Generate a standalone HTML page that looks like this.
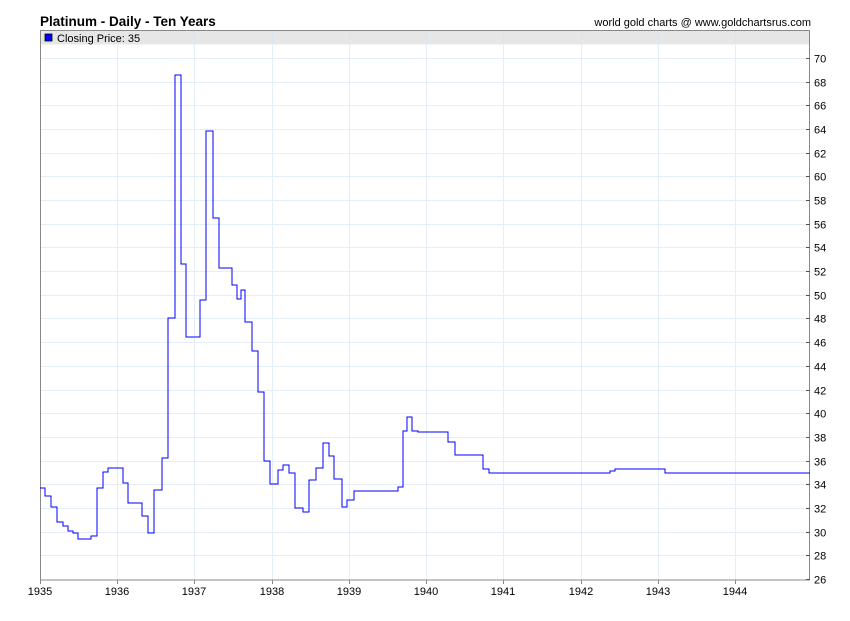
<!DOCTYPE html>
<html><head><meta charset="utf-8"><style>
body{margin:0;background:#fff;width:850px;height:616px;overflow:hidden;font-family:"Liberation Sans",sans-serif;}
</style></head><body>
<svg width="850" height="616" xmlns="http://www.w3.org/2000/svg" font-family="Liberation Sans, sans-serif">
<text x="40" y="26" font-size="13.5" font-weight="bold" fill="#000">Platinum - Daily - Ten Years</text>
<text x="811" y="26" font-size="11" text-anchor="end" fill="#000">world gold charts @ www.goldchartsrus.com</text>
<rect x="40.5" y="30.5" width="769" height="14" fill="#e6e6e6"/>
<g stroke="#e3eef9" stroke-width="1">
<line x1="117.5" y1="45" x2="117.5" y2="580"/><line x1="194.5" y1="45" x2="194.5" y2="580"/><line x1="272.5" y1="45" x2="272.5" y2="580"/><line x1="349.5" y1="45" x2="349.5" y2="580"/><line x1="426.5" y1="45" x2="426.5" y2="580"/><line x1="503.5" y1="45" x2="503.5" y2="580"/><line x1="581.5" y1="45" x2="581.5" y2="580"/><line x1="658.5" y1="45" x2="658.5" y2="580"/><line x1="735.5" y1="45" x2="735.5" y2="580"/>
<line x1="117.5" y1="31" x2="117.5" y2="44" stroke="#d8e4f0"/><line x1="194.5" y1="31" x2="194.5" y2="44" stroke="#d8e4f0"/><line x1="272.5" y1="31" x2="272.5" y2="44" stroke="#d8e4f0"/><line x1="349.5" y1="31" x2="349.5" y2="44" stroke="#d8e4f0"/><line x1="426.5" y1="31" x2="426.5" y2="44" stroke="#d8e4f0"/><line x1="503.5" y1="31" x2="503.5" y2="44" stroke="#d8e4f0"/><line x1="581.5" y1="31" x2="581.5" y2="44" stroke="#d8e4f0"/><line x1="658.5" y1="31" x2="658.5" y2="44" stroke="#d8e4f0"/><line x1="735.5" y1="31" x2="735.5" y2="44" stroke="#d8e4f0"/>
</g>
<g id="h" stroke="#e3eef9"></g>
<rect x="40.5" y="30.5" width="769" height="549.5" fill="none" stroke="#888"/>
<rect x="45" y="34" width="7" height="7" fill="#0000ff" stroke="#000" stroke-width="0.8"/>
<text x="57" y="42" font-size="11" fill="#000">Closing Price: 35</text>
<polyline fill="none" stroke="#0000ff" stroke-width="1" points="40,488 45,488 45,496 51,496 51,507 57,507 57,522 63,522 63,526 68,526 68,531 73,531 73,533 78,533 78,539 91,539 91,536 97,536 97,488 103,488 103,472 108,472 108,468 123,468 123,483 128,483 128,503 142,503 142,516 148,516 148,533 154,533 154,490 162,490 162,458 168,458 168,318 175,318 175,75 181,75 181,264 186,264 186,337 200,337 200,300 206,300 206,131 213,131 213,218 219,218 219,268 232,268 232,285 237,285 237,299 241,299 241,290 245,290 245,322 252,322 252,351 258,351 258,392 264,392 264,461 270,461 270,484 278,484 278,470 283,470 283,465 289,465 289,473 295,473 295,508 303,508 303,512 309,512 309,480 316,480 316,468 323,468 323,443 329,443 329,456 334,456 334,479 342,479 342,507 347,507 347,500 354,500 354,491 398,491 398,487 403,487 403,431 407,431 407,417 412,417 412,431 418,431 418,432 448,432 448,442 455,442 455,455 483,455 483,469 489,469 489,473 610,473 610,471 615,471 615,469 665,469 665,473 810,473"/>
<g font-size="11" fill="#000" text-anchor="middle">
<text x="40" y="595">1935</text><text x="117" y="595">1936</text><text x="194" y="595">1937</text><text x="272" y="595">1938</text><text x="349" y="595">1939</text><text x="426" y="595">1940</text><text x="503" y="595">1941</text><text x="581" y="595">1942</text><text x="658" y="595">1943</text><text x="735" y="595">1944</text>
</g>
<g stroke="#888"><line x1="40.5" y1="580" x2="40.5" y2="584"/><line x1="117.5" y1="580" x2="117.5" y2="584"/><line x1="194.5" y1="580" x2="194.5" y2="584"/><line x1="272.5" y1="580" x2="272.5" y2="584"/><line x1="349.5" y1="580" x2="349.5" y2="584"/><line x1="426.5" y1="580" x2="426.5" y2="584"/><line x1="503.5" y1="580" x2="503.5" y2="584"/><line x1="581.5" y1="580" x2="581.5" y2="584"/><line x1="658.5" y1="580" x2="658.5" y2="584"/><line x1="735.5" y1="580" x2="735.5" y2="584"/></g>
<g id="yl" font-size="11" fill="#000"></g>
<script>
var h=document.getElementById('h'),yl=document.getElementById('yl'),ns='http://www.w3.org/2000/svg';
for(var v=70;v>=26;v-=2){var y=Math.round(58+(70-v)*11.84)+0.5;
if(v>26){var l=document.createElementNS(ns,'line');l.setAttribute('x1',41);l.setAttribute('x2',809);l.setAttribute('y1',y);l.setAttribute('y2',y);h.appendChild(l);}
var t=document.createElementNS(ns,'line');t.setAttribute('x1',806);t.setAttribute('x2',810);t.setAttribute('y1',y);t.setAttribute('y2',y);t.setAttribute('stroke','#555');yl.appendChild(t);
var s=document.createElementNS(ns,'text');s.setAttribute('x',814);s.setAttribute('y',y+4);s.textContent=v;yl.appendChild(s);}
</script>
</svg>
</body></html>
